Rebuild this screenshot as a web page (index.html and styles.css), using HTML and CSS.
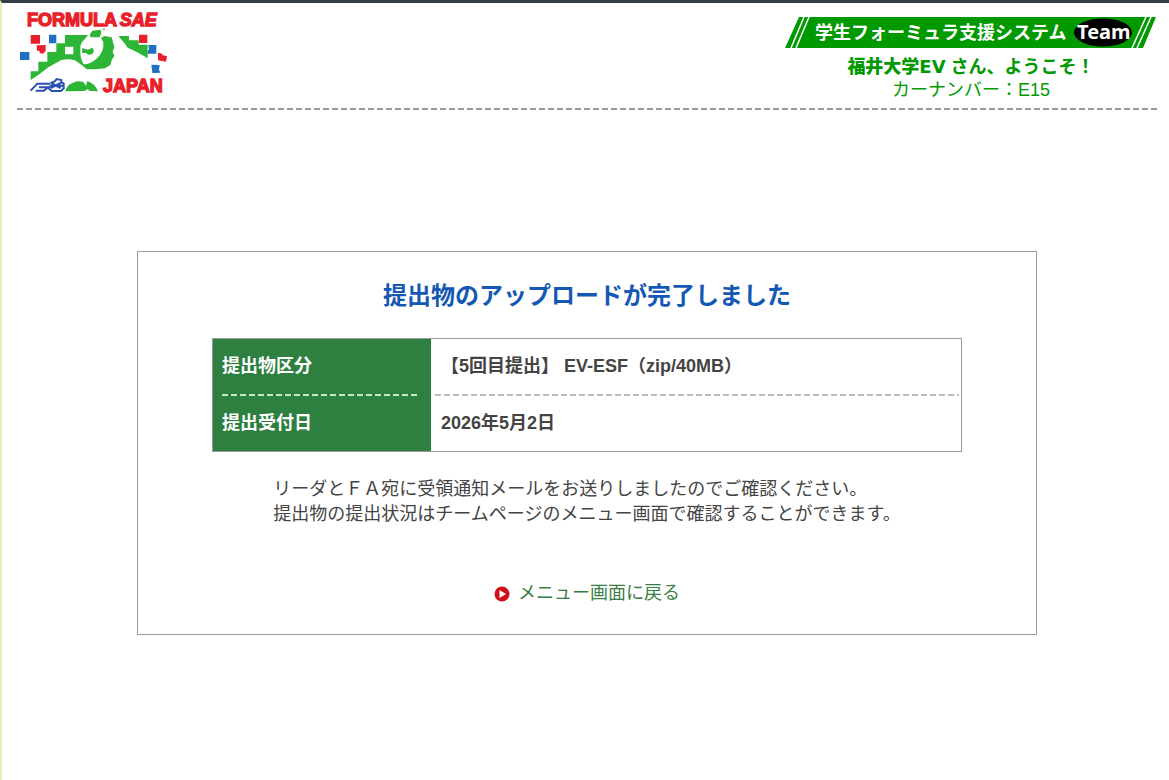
FILE: index.html
```html
<!DOCTYPE html>
<html lang="ja">
<head>
<meta charset="utf-8">
<meta name="viewport" content="width=device-width, initial-scale=1">
<title>学生フォーミュラ支援システム</title>
<link rel="stylesheet" href="styles.css">
</head>
<body>
<header class="header">
  <svg class="logo" viewBox="0 0 480 285" role="img" aria-label="FORMULA SAE JAPAN">
    <g class="logo-word">
      <text x="36" y="63">FORMULA</text>
      <text class="logo-italic" x="314" y="63">SAE</text>
      <text x="264" y="261">JAPAN</text>
    </g>
    <g fill="#2db535">
      <path d="M150 90H219L208 104Q196 112 196 130Q194 160 206 178Q228 178 246 160Q268 140 265 112L258 99L268 93L290 97L298 126L293 140L298 152L290 166L286 180L270 190L240 193L215 193L200 180L180 166Q160 160 139 165L100 187L75 206L47 225V199H70V170H97V141H124V115H150ZM150 125V148H175V125Z" fill-rule="evenodd"/>
      <path d="M232 77L257 74L259 85L254 97H226L225 88ZM260 72L270 70L268 75ZM202 129L218 134L233 128L237 139L231 148L219 149L214 144L201 143Z"/>
      <path d="M310 93H342V106H371V119H398V160L367 142L338 128L330 116Z"/>
      <path d="M151 259Q157 235 187 229L204 230L213 242L217 228Q238 234 249 259L225 258L218 253L208 258Z"/>
    </g>
    <g fill="#e8202a">
      <path d="M47 90H75V116H47ZM65 121L92 120V138L84 146L74 144V138L66 137ZM372 89H397V114H372ZM429 143L442 146V151L456 153L453 170L429 166Z"/>
    </g>
    <g fill="#1f6fc5">
      <path d="M102 89H124V115H102ZM15 141H43V165H15ZM400 120H424V146H398V136H402ZM409 179L434 180L432 194L436 203L412 204Z"/>
    </g>
    <g fill="none" stroke="#2850b0" stroke-width="6">
      <path d="M47 257L67 236H106M72 247H98L87 257H62M107 234L119 229L125 222L139 225V232L146 236V250L138 258H110L100 249L108 242H146M108 234L137 249M107 249L137 234"/>
    </g>
  </svg>
  <div class="account">
    <svg class="banner" viewBox="0 0 372 31" role="img" aria-label="学生フォーミュラ支援システム Team">
      <path d="M14 0H371L358 31H0Z" fill="#090"/>
      <path d="M19 0L6 31M24 0L11 31M361 0L347 31M366 0L352 31" stroke="#fff" stroke-width="1.5"/>
      <ellipse cx="318" cy="15.5" rx="29" ry="14" fill="#000"/>
      <text class="banner-title" x="30" y="22">学生フォーミュラ支援システム</text>
      <text class="banner-team" x="292" y="22">Team</text>
    </svg>
    <p class="welcome"><strong>福井大学EV</strong> さん、ようこそ！</p>
    <p class="car">カーナンバー：E15</p>
  </div>
</header>
<main class="card">
  <h1 class="title">提出物のアップロードが完了しました</h1>
  <table class="details">
    <tr>
      <th scope="row"><div class="label ruled">提出物区分</div></th>
      <td><div class="value ruled">【5回目提出】 EV-ESF（zip/40MB）</div></td>
    </tr>
    <tr>
      <th scope="row"><div class="label">提出受付日</div></th>
      <td><div class="value">2026年5月2日</div></td>
    </tr>
  </table>
  <p class="note">リーダとＦＡ宛に受領通知メールをお送りしましたのでご確認ください。<br>提出物の提出状況はチームページのメニュー画面で確認することができます。</p>
  <a class="back" href="#">
    <svg class="back-icon" viewBox="0 0 16 16" aria-hidden="true">
      <circle cx="8" cy="8" r="7.5" fill="#d01018"/>
      <path d="M5.5 4L12 8L5.5 12Z" fill="#fff"/>
    </svg>
    メニュー画面に戻る
  </a>
</main>
</body>
</html>
```
FILE: styles.css
```css
* {
  box-sizing: border-box;
}

body {
  margin: 0;
  min-height: 100vh;
  padding: 2px 12px 24px 15px;
  border-top: 3px solid #2f3f45;
  border-left: 2px solid #def2b8;
  background: #fff;
  color: #444;
  font: 18px/25px "Liberation Sans", "Noto Sans CJK JP", sans-serif;
}

p,
h1 {
  margin: 0;
}

.header {
  display: flex;
  justify-content: space-between;
  align-items: flex-start;
  padding-bottom: 8px;
  background: repeating-linear-gradient(90deg, #999 0 6px, transparent 6px 9px) bottom / 100% 2px no-repeat;
}

.logo {
  width: 160px;
  height: 95px;
  margin-left: -2px;
}

.logo-word {
  fill: #e8202a;
  stroke: #e8202a;
  stroke-width: 4px;
  font: bold 54px "Liberation Sans", sans-serif;
}

.logo-italic {
  font-style: italic;
}

.account {
  padding-top: 12px;
  color: #090;
  line-height: 23px;
  text-align: center;
}

.banner {
  display: block;
  width: 372px;
  height: 31px;
  margin-bottom: 7px;
}

.banner-title {
  fill: #fff;
  font: bold 18px "Noto Sans CJK JP", sans-serif;
}

.banner-team {
  fill: #fff;
  font: bold 20px "Noto Sans", sans-serif;
}

.welcome {
  font-weight: bold;
}

.welcome strong {
  font-family: "DejaVu Sans", "Noto Sans CJK JP", sans-serif;
  font-weight: 900;
}

.card {
  display: flex;
  flex-direction: column;
  align-items: center;
  max-width: 900px;
  margin: 141px auto 0;
  padding: 28px 24px;
  border: 1px solid #999;
}

.title {
  color: #1558b4;
  font-size: 24px;
  line-height: 32px;
}

.details {
  width: 100%;
  max-width: 750px;
  margin: 26px 0 25px;
  border: 1px solid #999;
  border-collapse: separate;
  border-spacing: 0;
  font-weight: bold;
}

.details th {
  width: 218px;
  padding: 0 14px 0 9px;
  background: #2d8040;
  color: #fff;
  text-align: left;
}

.details td {
  padding: 0 2px 0 4px;
}

.label,
.value {
  padding: 15px 0;
}

.value {
  padding-left: 6px;
}

.ruled {
  padding-bottom: 17px;
  background: repeating-linear-gradient(90deg, #bbb 0 6px, transparent 6px 9px) bottom / 100% 2px no-repeat;
}

.label.ruled {
  background-image: repeating-linear-gradient(90deg, #c4e8c8 0 6px, transparent 6px 9px);
}

.back {
  display: flex;
  align-items: center;
  gap: 8px;
  margin-top: 54px;
  color: #3a7d44;
  text-decoration: none;
}

.back-icon {
  width: 16px;
  height: 16px;
}
```
